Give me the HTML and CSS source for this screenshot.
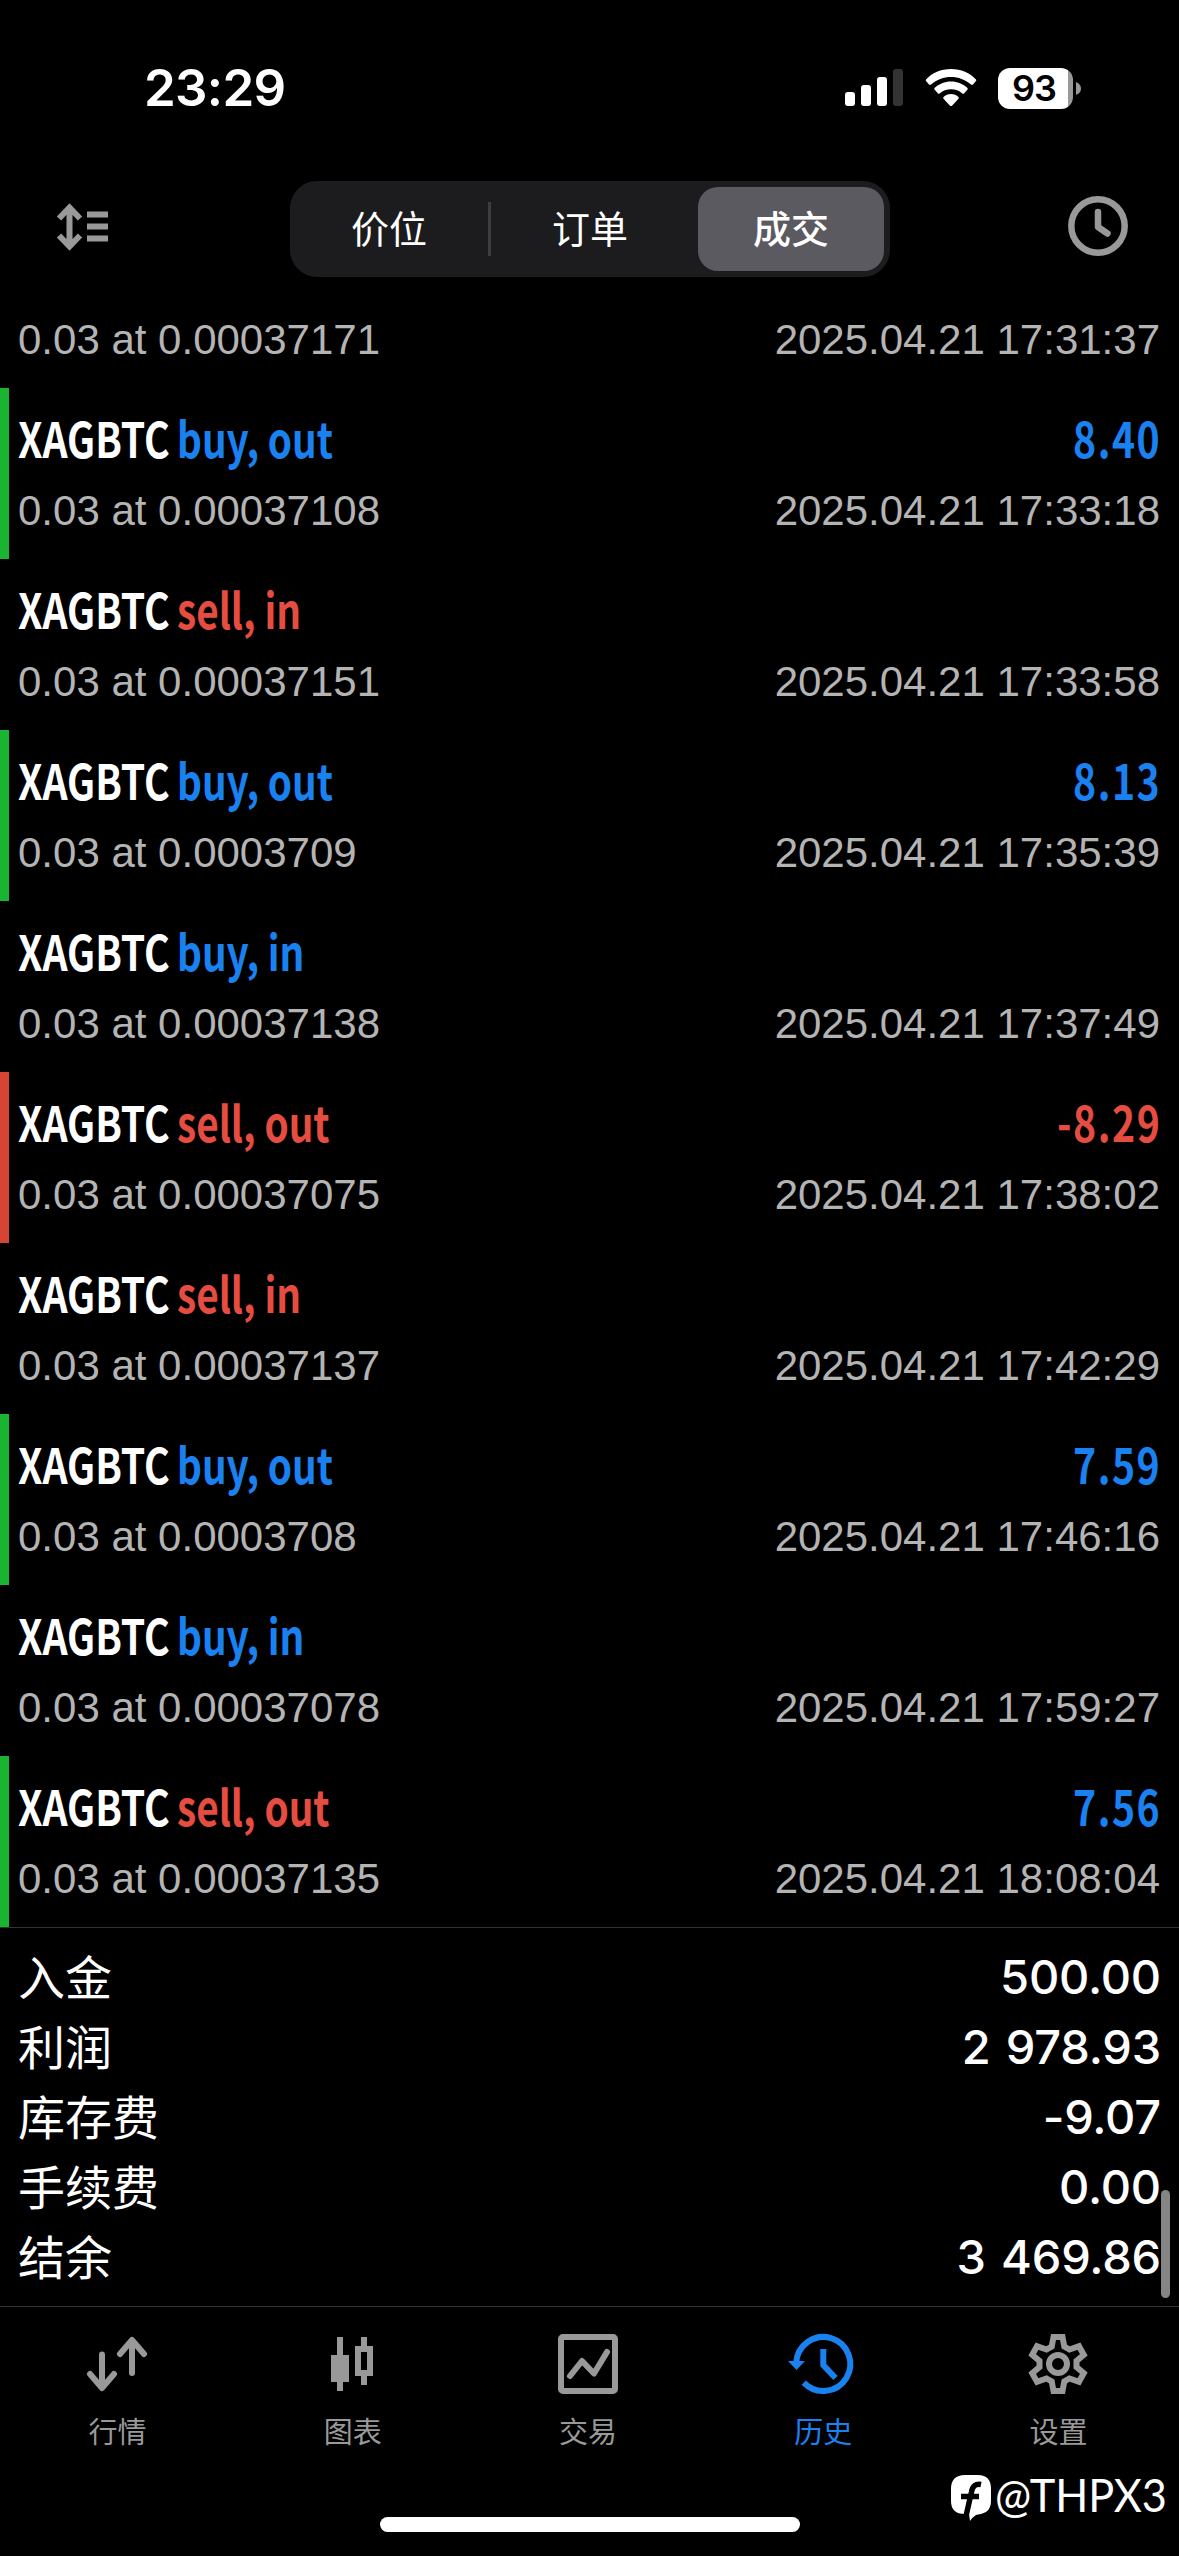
FILE: index.html
```html
<!DOCTYPE html>
<html lang="zh">

<head>
  <meta charset="UTF-8">
  <meta name="viewport" content="width=device-width, initial-scale=1.0">
  <title>历史</title>
  <link rel="stylesheet" href="styles.css">
</head>

<body>
  <!-- 状态栏 -->
  <header class="status-bar">
    <span class="time">23:29</span>
    <div class="status-icons">
      <svg class="signal" width="58" height="38" viewBox="0 0 58 38">
        <rect x="0" y="23" width="10" height="14" rx="3" fill="#fff" />
        <rect x="16" y="16" width="10" height="21" rx="3" fill="#fff" />
        <rect x="32" y="8" width="10" height="29" rx="3" fill="#fff" />
        <rect x="48" y="0" width="10" height="37" rx="3" fill="#333" />
      </svg>
      <svg class="wifi" width="52" height="38" viewBox="0 0 52 38">
        <path d="M26 0C36 0 45 4 51 10.500Q51.500 11.500 51 12L48 15.500Q47 16.300 46 15.500C40 10.500 33.500 8 26 8S12 10.500 6 15.500Q5 16.300 4 15.500L1 12Q.500 11.500 1 10.500C7 4 16 0 26 0Z" />
        <path d="M26 12.500C32.500 12.500 38 15 42.500 19Q43 20 42.500 20.500L39 24.500Q38 25 37.300 24.500C34 21.500 30.500 20.300 26 20.300S18 21.500 14.700 24.500Q14 25 13 24.500L9.500 20.500Q9 20 9.500 19C14 15 19.500 12.500 26 12.500Z" />
        <path d="M26 25C29 25 31.500 26.200 33.500 28Q34 29 33.500 29.800L27 36.700Q26 37.500 25 36.700L18.500 29.800Q18 29 18.500 28C20.500 26.200 23 25 26 25Z" />
      </svg>
      <div class="battery">
        <span class="battery-text">93</span>
      </div>
      <svg class="battery-cap" width="5" height="13" viewBox="0 0 5 13">
        <path d="M0 0Q5 2 5 6.500T0 13Z" />
      </svg>
    </div>
  </header>

  <!-- 顶部导航 -->
  <nav class="toolbar">
    <svg class="icon-sort" width="52" height="48" viewBox="0 0 52 48">
      <path d="M12.500 4V44M2 15.500L12.500 4.500L23 15.500M2 32.500L12.500 43.500L23 32.500" />
      <path d="M30 11.500H51M30 23.500H51M30 35.500H51" />
    </svg>
    <div class="segment">
      <div class="segment-item">价位</div>
      <div class="divider"></div>
      <div class="segment-item">订单</div>
      <div class="segment-item active">成交</div>
    </div>
    <svg class="icon-clock" width="60" height="60" viewBox="0 0 60 60">
      <circle cx="30" cy="30" r="26.700" />
      <path d="M30 16V31L39.500 37.500" />
    </svg>
  </nav>

  <!-- 成交列表 -->
  <main class="deals">
    <div class="deal">
      <div class="detail"><span>0.03 at 0.00037171</span><span>2025.04.21 17:31:37</span></div>
    </div>
    <div class="deal win">
      <div class="title"><span class="symbol">XAGBTC</span><span class="side blue">buy, out</span><span class="profit blue">8.40</span></div>
      <div class="detail"><span>0.03 at 0.00037108</span><span>2025.04.21 17:33:18</span></div>
    </div>
    <div class="deal">
      <div class="title"><span class="symbol">XAGBTC</span><span class="side red">sell, in</span></div>
      <div class="detail"><span>0.03 at 0.00037151</span><span>2025.04.21 17:33:58</span></div>
    </div>
    <div class="deal win">
      <div class="title"><span class="symbol">XAGBTC</span><span class="side blue">buy, out</span><span class="profit blue">8.13</span></div>
      <div class="detail"><span>0.03 at 0.0003709</span><span>2025.04.21 17:35:39</span></div>
    </div>
    <div class="deal">
      <div class="title"><span class="symbol">XAGBTC</span><span class="side blue">buy, in</span></div>
      <div class="detail"><span>0.03 at 0.00037138</span><span>2025.04.21 17:37:49</span></div>
    </div>
    <div class="deal loss">
      <div class="title"><span class="symbol">XAGBTC</span><span class="side red">sell, out</span><span class="profit red">-8.29</span></div>
      <div class="detail"><span>0.03 at 0.00037075</span><span>2025.04.21 17:38:02</span></div>
    </div>
    <div class="deal">
      <div class="title"><span class="symbol">XAGBTC</span><span class="side red">sell, in</span></div>
      <div class="detail"><span>0.03 at 0.00037137</span><span>2025.04.21 17:42:29</span></div>
    </div>
    <div class="deal win">
      <div class="title"><span class="symbol">XAGBTC</span><span class="side blue">buy, out</span><span class="profit blue">7.59</span></div>
      <div class="detail"><span>0.03 at 0.0003708</span><span>2025.04.21 17:46:16</span></div>
    </div>
    <div class="deal">
      <div class="title"><span class="symbol">XAGBTC</span><span class="side blue">buy, in</span></div>
      <div class="detail"><span>0.03 at 0.00037078</span><span>2025.04.21 17:59:27</span></div>
    </div>
    <div class="deal win">
      <div class="title"><span class="symbol">XAGBTC</span><span class="side red">sell, out</span><span class="profit blue">7.56</span></div>
      <div class="detail"><span>0.03 at 0.00037135</span><span>2025.04.21 18:08:04</span></div>
    </div>
  </main>

  <!-- 汇总 -->
  <section class="summary">
    <div class="summary-row"><span>入金</span><span class="amount">500.00</span></div>
    <div class="summary-row"><span>利润</span><span class="amount">2 978.93</span></div>
    <div class="summary-row"><span>库存费</span><span class="amount">-9.07</span></div>
    <div class="summary-row"><span>手续费</span><span class="amount">0.00</span></div>
    <div class="summary-row"><span>结余</span><span class="amount">3 469.86</span></div>
    <div class="scrollbar"></div>
  </section>

  <!-- 底部标签栏 -->
  <footer class="tab-bar">
    <div class="tab">
      <svg width="64" height="60" viewBox="0 0 64 60">
        <g class="line round">
          <path d="M16 20.500V53M4 40L16 54L28 40" />
          <path d="M46 39V7M34 20L46 6L58 20" />
        </g>
      </svg>
      <span>行情</span>
    </div>
    <div class="tab">
      <svg width="64" height="60" viewBox="0 0 64 60">
        <path class="solid" d="M16 3h6v18h6v27h-6v9h-6v-9h-6v-27h6z" />
        <path class="solid" fill-rule="evenodd" d="M40 3h6v9h6v30h-6v9h-6v-9h-6v-30h6zM40 18v18h6v-18z" />
      </svg>
      <span>图表</span>
    </div>
    <div class="tab">
      <svg width="64" height="60" viewBox="0 0 64 60">
        <g class="line round">
          <rect x="5" y="3" width="54" height="54" rx="2" />
          <path d="M14 42L26 27L38 39.500L51 18" />
        </g>
      </svg>
      <span>交易</span>
    </div>
    <div class="tab active">
      <svg width="64" height="60" viewBox="0 0 64 60">
        <g class="line">
          <path d="M5.300 29A27 27 0 1 1 12.800 48.700" />
          <path d="M32.300 15V31L44.500 44" />
        </g>
        <path class="solid" d="M-3 27H14L5.500 36Z" />
      </svg>
      <span>历史</span>
    </div>
    <div class="tab">
      <svg width="64" height="60" viewBox="0 0 64 60">
        <g class="line">
          <path d="M27.500 3H36.500L38.300 12.500L43.500 15.500L53 12.200L57.800 20.800L50.500 27V33L57.800 39.200L53 47.800L43.500 44.500L38.300 47.500L36.500 57H27.500L25.700 47.500L20.500 44.500L11 47.800L6.200 39.200L13.500 33V27L6.200 20.800L11 12.200L20.500 15.500L25.700 12.500Z" />
          <circle cx="32" cy="30" r="9" />
        </g>
      </svg>
      <span>设置</span>
    </div>
  </footer>

  <div class="home-indicator"></div>

  <!-- 水印 -->
  <div class="watermark">
    <svg width="40" height="46" viewBox="0 0 40 46">
      <path fill="#fff" d="M14 0H27Q40 0 40 14V26Q40 38 27 39.500Q23 40 19 46L18 39H14Q0 39 0 26V14Q0 0 14 0Z" />
      <path class="mark" d="M30 9.500Q22 8 20.500 17L15 41M10 21.500H28" />
    </svg>
    <span class="account">@THPX3</span>
  </div>
</body>

</html>
```
FILE: styles.css
```css
* {
  box-sizing: border-box;
}

body {
  position: relative;
  margin: 0;
  width: 1179px;
  height: 2556px;
  overflow: hidden;
  display: flex;
  flex-direction: column;
  background-color: #000;
  color: #fff;
  font-family: "Inter", "Noto Sans CJK SC", sans-serif;
}

svg {
  display: block;
  flex: none;
  overflow: visible;
}

/* 状态栏 ========*/
.status-bar {
  display: flex;
  justify-content: space-between;
  height: 176px;
  padding: 56px 98px 0 144px;
}

.time {
  font-size: 51px;
  font-weight: 600;
  line-height: 64px;
  letter-spacing: -.7px;
}

.status-icons {
  display: flex;
  align-items: center;
  height: 64px;
}

.wifi {
  margin-left: 22px;
  fill: #fff;
}

.battery {
  width: 75px;
  height: 41px;
  margin-left: 21px;
  border-radius: 12px;
  background: linear-gradient(to right, #fff 70px, #999 70px);
}

.battery-text {
  display: block;
  width: 72px;
  color: #000;
  font-size: 36px;
  font-weight: 600;
  line-height: 41px;
  letter-spacing: -1px;
  text-align: center;
}

.battery-cap {
  margin-left: 3px;
  fill: #999;
}

/* 顶部导航 ========*/
.toolbar {
  display: flex;
  justify-content: space-between;
  align-items: flex-start;
  height: 112px;
  padding: 5px 51px 0 57px;
}

.icon-sort {
  margin-top: 22px;
  fill: none;
  stroke: #999;
  stroke-width: 6;
}

.icon-clock {
  margin-top: 15px;
  fill: none;
  stroke: #999;
  stroke-width: 6.5;
  stroke-linecap: round;
  stroke-linejoin: round;
}

.segment {
  display: flex;
  align-items: center;
  width: 600px;
  height: 96px;
  margin-left: 3px;
  border-radius: 27px;
  background-color: #1c1c1e;
}

.segment-item {
  width: 198px;
  height: 84px;
  border-radius: 20px;
  font-size: 38px;
  line-height: 85px;
  text-align: center;
}

.segment-item.active {
  width: 186px;
  margin-left: 9px;
  background-color: #5b5a60;
  font-weight: 500;
}

.divider {
  width: 3px;
  height: 54px;
  background-color: #3d3d40;
}

/* 成交列表 ========*/
.deals {
  display: flex;
  flex-direction: column;
  justify-content: flex-end;
  height: 1639px;
}

.deal {
  flex: none;
  display: flex;
  flex-direction: column;
  justify-content: flex-end;
  height: 171px;
  padding: 0 19px 16px 9px;
  border-left: 9px solid transparent;
}

.deal:first-child {
  height: 100px;
}

.win {
  border-left-color: #1ab433;
}

.loss {
  border-left-color: #d64533;
}

.title {
  display: flex;
  height: 77px;
  font-family: "Noto Sans CJK SC", sans-serif;
  font-size: 49px;
  font-weight: 700;
  line-height: 70px;
}

.symbol,
.side {
  width: 159px;
  white-space: nowrap;
  transform: scaleX(.8);
  transform-origin: left;
}

.side {
  transform: scaleX(.79);
}

.profit {
  margin-left: auto;
  margin-right: -1px;
  letter-spacing: 1.9px;
  transform: scaleX(.8);
  transform-origin: right;
}

.blue {
  color: #1a82f0;
}

.red {
  color: #e54d40;
}

.detail {
  display: flex;
  justify-content: space-between;
  color: #b4b4b4;
  font-family: "Liberation Sans", sans-serif;
  font-size: 42px;
  line-height: 64px;
}

/* 汇总 ========*/
.summary {
  position: relative;
  height: 379px;
  padding: 12px 18px 0;
  border-top: 1px solid #333;
}

.summary-row {
  display: flex;
  justify-content: space-between;
  height: 70px;
  font-family: "Noto Sans CJK SC", sans-serif;
  font-size: 47px;
  line-height: 70px;
}

.amount {
  padding-top: 2px;
  font-family: "Inter", sans-serif;
  font-weight: 500;
  letter-spacing: -.2px;
  word-spacing: 3px;
}

/* 滚动条浮在内容上 */
.scrollbar {
  position: absolute;
  top: 262px;
  right: 9px;
  width: 9px;
  height: 108px;
  border-radius: 5px;
  background-color: #858585;
}

/* 标签栏 ========*/
.tab-bar {
  display: flex;
  height: 211px;
  padding: 27px 3px 0 0;
  border-top: 1px solid #333;
}

.tab {
  flex: 1;
  display: flex;
  flex-direction: column;
  align-items: center;
  gap: 17px;
  color: #999;
  font-size: 29px;
  line-height: 44px;
}

.tab.active {
  color: #1a82f0;
}

.line {
  fill: none;
  stroke: currentColor;
  stroke-width: 6;
}

.round {
  stroke-linecap: round;
  stroke-linejoin: round;
}

.solid {
  fill: currentColor;
}

.home-indicator {
  width: 420px;
  height: 15px;
  margin-left: 380px;
  border-radius: 8px;
  background-color: #fff;
}

/* 水印 */
.watermark {
  position: absolute;
  left: 951px;
  bottom: 34px;
  display: flex;
  align-items: center;
  gap: 4px;
  font-family: "Lato", sans-serif;
  font-size: 46px;
  line-height: 54px;
}

.account {
  margin-top: -5px;
  transform: scaleX(.94);
  transform-origin: left;
}

.mark {
  fill: none;
  stroke: #000;
  stroke-width: 5.5;
}
```
